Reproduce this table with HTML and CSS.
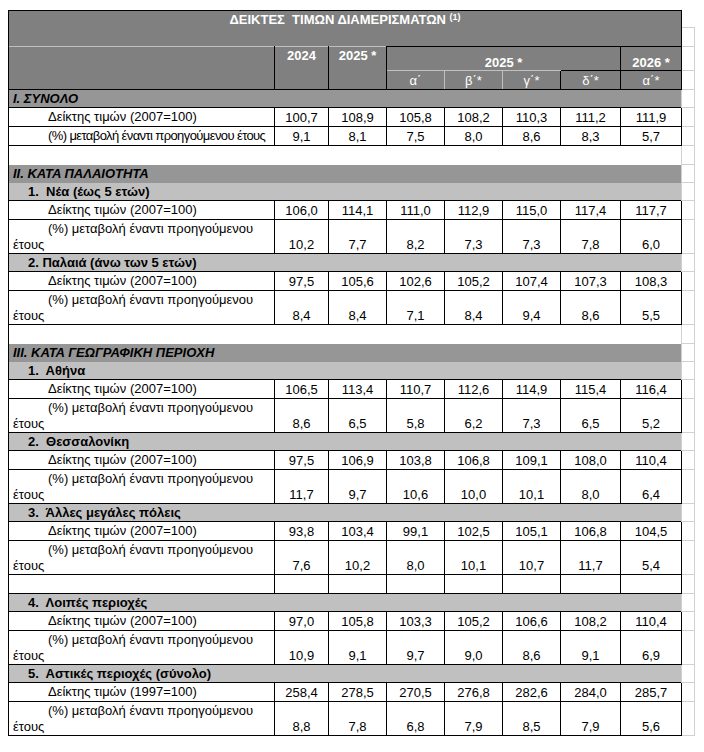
FILE: index.html
```html
<!DOCTYPE html>
<html lang="el">
<head>
<meta charset="utf-8">
<title>Δείκτες τιμών διαμερισμάτων</title>
<link rel="stylesheet" href="styles.css">
</head>
<body>
<table class="sheet">
<colgroup>
<col class="c-label"><col class="c-y"><col class="c-y"><col class="c-q"><col class="c-q"><col class="c-q"><col class="c-q26"><col class="c-q26b"><col class="c-gut">
</colgroup>

<tr class="r-t1"><td class="title" colspan="8" rowspan="2">ΔΕΙΚΤΕΣ&nbsp; ΤΙΜΩΝ ΔΙΑΜΕΡΙΣΜΑΤΩΝ <sup>(1)</sup></td><td class="gut0"></td></tr>
<tr class="r-t2"><td class="gut"></td></tr>
<tr class="r-h1"><td class="hblank" rowspan="2"></td><td class="hyear" rowspan="2">2024</td><td class="hyear" rowspan="2">2025 *</td><td class="hspan" colspan="4">2025 *</td><td class="h26">2026 *</td><td class="gut"></td></tr>
<tr class="r-h2"><td class="hsub">α΄</td><td class="hsub">β΄*</td><td class="hsub">γ΄*</td><td class="hsub hdark">δ΄*</td><td class="hsub hdark">α΄*</td><td class="gut"></td></tr>

<!-- I. Σύνολο -->
<tr class="r-sec"><td class="sec" colspan="8">I. ΣΥΝΟΛΟ</td><td class="gut"></td></tr>
<tr class="r-d"><td class="lab">Δείκτης τιμών (2007=100)</td><td class="num">100,7</td><td class="num">108,9</td><td class="num">105,8</td><td class="num">108,2</td><td class="num">110,3</td><td class="num">111,2</td><td class="num">111,9</td><td class="gut"></td></tr>
<tr class="r-d"><td class="lab tight">(%) μεταβολή έναντι προηγούμενου έτους</td><td class="num">9,1</td><td class="num">8,1</td><td class="num">7,5</td><td class="num">8,0</td><td class="num">8,6</td><td class="num">8,3</td><td class="num">5,7</td><td class="gut"></td></tr>
<tr class="r-blank"><td class="blank" colspan="8"></td><td class="gut"></td></tr>

<!-- II. Κατά παλαιότητα -->
<tr class="r-sec"><td class="sec" colspan="8">II. ΚΑΤΑ ΠΑΛΑΙΟΤΗΤΑ</td><td class="gut"></td></tr>
<tr class="r-sub"><td class="subsec" colspan="8">1.&nbsp; Νέα (έως 5 ετών)</td><td class="gut"></td></tr>
<tr class="r-d"><td class="lab">Δείκτης τιμών (2007=100)</td><td class="num">106,0</td><td class="num">114,1</td><td class="num">111,0</td><td class="num">112,9</td><td class="num">115,0</td><td class="num">117,4</td><td class="num">117,7</td><td class="gut"></td></tr>
<tr class="r-d2"><td class="lab">(%) μεταβολή έναντι προηγούμενου<br>έτους</td><td class="num">10,2</td><td class="num">7,7</td><td class="num">8,2</td><td class="num">7,3</td><td class="num">7,3</td><td class="num">7,8</td><td class="num">6,0</td><td class="gut"></td></tr>
<tr class="r-sub"><td class="subsec" colspan="8">2. Παλαιά (άνω των 5 ετών)</td><td class="gut"></td></tr>
<tr class="r-d"><td class="lab">Δείκτης τιμών (2007=100)</td><td class="num">97,5</td><td class="num">105,6</td><td class="num">102,6</td><td class="num">105,2</td><td class="num">107,4</td><td class="num">107,3</td><td class="num">108,3</td><td class="gut"></td></tr>
<tr class="r-d2"><td class="lab">(%) μεταβολή έναντι προηγούμενου<br>έτους</td><td class="num">8,4</td><td class="num">8,4</td><td class="num">7,1</td><td class="num">8,4</td><td class="num">9,4</td><td class="num">8,6</td><td class="num">5,5</td><td class="gut"></td></tr>
<tr class="r-blank"><td class="blank" colspan="8"></td><td class="gut"></td></tr>

<!-- III. Κατά γεωγραφική περιοχή -->
<tr class="r-sec"><td class="sec" colspan="8">III. ΚΑΤΑ ΓΕΩΓΡΑΦΙΚΗ ΠΕΡΙΟΧΗ</td><td class="gut"></td></tr>
<tr class="r-sub"><td class="subsec" colspan="8">1.&nbsp; Αθήνα</td><td class="gut"></td></tr>
<tr class="r-d"><td class="lab">Δείκτης τιμών (2007=100)</td><td class="num">106,5</td><td class="num">113,4</td><td class="num">110,7</td><td class="num">112,6</td><td class="num">114,9</td><td class="num">115,4</td><td class="num">116,4</td><td class="gut"></td></tr>
<tr class="r-d2"><td class="lab">(%) μεταβολή έναντι προηγούμενου<br>έτους</td><td class="num">8,6</td><td class="num">6,5</td><td class="num">5,8</td><td class="num">6,2</td><td class="num">7,3</td><td class="num">6,5</td><td class="num">5,2</td><td class="gut"></td></tr>
<tr class="r-sub"><td class="subsec" colspan="8">2.&nbsp; Θεσσαλονίκη</td><td class="gut"></td></tr>
<tr class="r-d"><td class="lab">Δείκτης τιμών (2007=100)</td><td class="num">97,5</td><td class="num">106,9</td><td class="num">103,8</td><td class="num">106,8</td><td class="num">109,1</td><td class="num">108,0</td><td class="num">110,4</td><td class="gut"></td></tr>
<tr class="r-d2"><td class="lab">(%) μεταβολή έναντι προηγούμενου<br>έτους</td><td class="num">11,7</td><td class="num">9,7</td><td class="num">10,6</td><td class="num">10,0</td><td class="num">10,1</td><td class="num">8,0</td><td class="num">6,4</td><td class="gut"></td></tr>
<tr class="r-sub"><td class="subsec" colspan="8">3.&nbsp; Άλλες μεγάλες πόλεις</td><td class="gut"></td></tr>
<tr class="r-d"><td class="lab">Δείκτης τιμών (2007=100)</td><td class="num">93,8</td><td class="num">103,4</td><td class="num">99,1</td><td class="num">102,5</td><td class="num">105,1</td><td class="num">106,8</td><td class="num">104,5</td><td class="gut"></td></tr>
<tr class="r-d2"><td class="lab">(%) μεταβολή έναντι προηγούμενου<br>έτους</td><td class="num">7,6</td><td class="num">10,2</td><td class="num">8,0</td><td class="num">10,1</td><td class="num">10,7</td><td class="num">11,7</td><td class="num">5,4</td><td class="gut"></td></tr>
<tr class="r-d"><td class="lab"></td><td class="num"></td><td class="num"></td><td class="num"></td><td class="num"></td><td class="num"></td><td class="num"></td><td class="num"></td><td class="gut"></td></tr>
<tr class="r-sub"><td class="subsec" colspan="8">4.&nbsp; Λοιπές περιοχές</td><td class="gut"></td></tr>
<tr class="r-d"><td class="lab">Δείκτης τιμών (2007=100)</td><td class="num">97,0</td><td class="num">105,8</td><td class="num">103,3</td><td class="num">105,2</td><td class="num">106,6</td><td class="num">108,2</td><td class="num">110,4</td><td class="gut"></td></tr>
<tr class="r-d2"><td class="lab">(%) μεταβολή έναντι προηγούμενου<br>έτους</td><td class="num">10,9</td><td class="num">9,1</td><td class="num">9,7</td><td class="num">9,0</td><td class="num">8,6</td><td class="num">9,1</td><td class="num">6,9</td><td class="gut"></td></tr>
<tr class="r-sub"><td class="subsec" colspan="8">5.&nbsp; Αστικές περιοχές (σύνολο)</td><td class="gut"></td></tr>
<tr class="r-d"><td class="lab">Δείκτης τιμών (1997=100)</td><td class="num">258,4</td><td class="num">278,5</td><td class="num">270,5</td><td class="num">276,8</td><td class="num">282,6</td><td class="num">284,0</td><td class="num">285,7</td><td class="gut"></td></tr>
<tr class="r-d2"><td class="lab">(%) μεταβολή έναντι προηγούμενου<br>έτους</td><td class="num">8,8</td><td class="num">7,8</td><td class="num">6,8</td><td class="num">7,9</td><td class="num">8,5</td><td class="num">7,9</td><td class="num">5,6</td><td class="gut"></td></tr>
</table>
</body>
</html>
```

FILE: styles.css
```css
/* Price indices sheet, Excel look */

body
{ margin: 0;
padding: 10px 8px;
background-color: #fff;
font-family: "Liberation Sans", Arial, sans-serif;
font-size: 13px;
color: #000;
}

table.sheet
{ border-collapse: collapse;
table-layout: fixed;
width: 687px;
}

col.c-label { width: 266px; }
col.c-y { width: 54px; }
col.c-y + col.c-y { width: 58px; }
col.c-q { width: 58px; }
col.c-q26 { width: 60px; }
col.c-q26b { width: 61px; }
col.c-gut { width: 13px; }

td
{ padding: 0;
white-space: nowrap;
}

tr.r-t1 { height: 17px; }
tr.r-t2 { height: 19px; }
tr.r-h1 { height: 24px; }
tr.r-h2 { height: 19px; }
tr.r-sec { height: 18px; }
tr.r-sub { height: 18px; }
tr.r-d { height: 19px; }
tr.r-d2 { height: 34px; }
tr.r-blank { height: 19px; }

/* Header */

td.title
{ background-color: #808080;
color: #fff;
font-weight: bold;
text-align: center;
vertical-align: top;
padding-top: 1px;
border: 1px solid #000;
border-bottom: none;
}

td.title sup
{ font-size: 9px;
vertical-align: 4px;
}

td.hblank,
td.hyear
{ background-color: #808080;
border-top: 1px solid #c0c0c0;
border-bottom: 1px solid #000;
border-right: 1px solid #000;
}

td.hblank { border-left: 1px solid #000; }

td.hyear
{ color: #fff;
font-weight: bold;
text-align: center;
vertical-align: top;
padding-top: 1px;
}

td.hspan,
td.h26
{ background-color: #808080;
color: #fff;
font-weight: bold;
text-align: center;
vertical-align: bottom;
border-top: 1px solid #000;
border-right: 1px solid #000;
}

td.h26 { border-bottom: 1px solid #000; }

td.hsub
{ background-color: #808080;
color: #fff;
text-align: center;
border-top: 1px solid #c0c0c0;
border-left: 1px solid #c0c0c0;
border-bottom: 1px solid #000;
}

td.hdark
{ border-top: 1px solid #000;
border-left: 1px solid #000;
border-right: 1px solid #000;
}

/* Body */

td.sec
{ background-color: #969696;
font-weight: bold;
font-style: italic;
padding-left: 4px;
border-left: 1px solid #000;
}

td.subsec
{ background-color: #c0c0c0;
font-weight: bold;
padding-left: 19px;
border-left: 1px solid #000;
}

td.blank { border-left: 1px solid #000; }

td.lab
{ border: 1px solid #000;
padding-left: 4px;
text-indent: 35px;
line-height: 16px;
}

td.tight { letter-spacing: -0.6px; }

td.num
{ border: 1px solid #000;
text-align: center;
}

tr.r-d2 td.num
{ vertical-align: bottom;
padding-bottom: 1px;
}

td.gut
{ border: 1px solid #d0d0d0;
}

td.gut0 { border: none; }
```
